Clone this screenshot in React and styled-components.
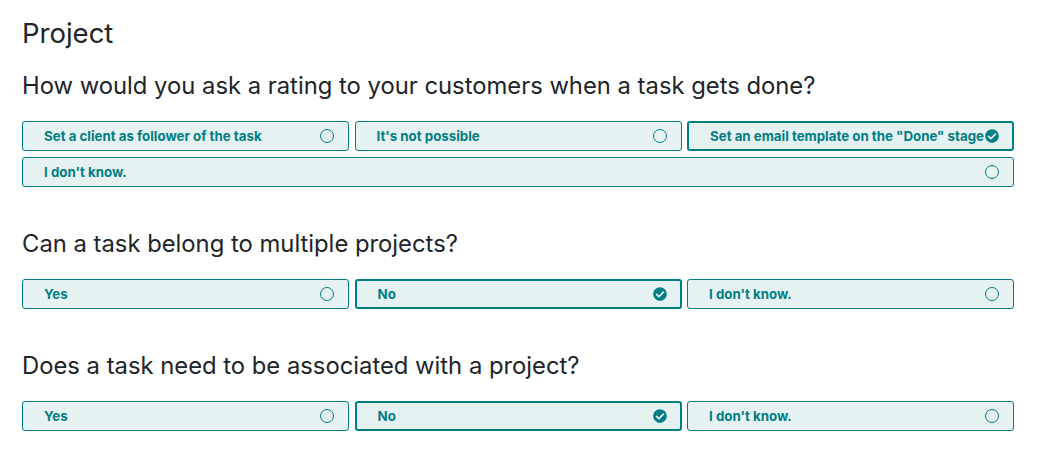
import React from 'react'
import styled, { createGlobalStyle } from 'styled-components'
import { FaCheckCircle } from 'react-icons/fa'

const GlobalStyle = createGlobalStyle`
  body {
    margin: 0;
    background: #ffffff;
    font-family: Inter, "Noto Sans", sans-serif;
  }
`

const questions = [
  {
    text: 'How would you ask a rating to your customers when a task gets done?',
    answers: [
      'Set a client as follower of the task',
      "It's not possible",
      'Set an email template on the "Done" stage',
      "I don't know.",
    ],
    picked: 2,
  },
  {
    text: 'Can a task belong to multiple projects?',
    answers: ['Yes', 'No', "I don't know."],
    picked: 1,
  },
  {
    text: 'Does a task need to be associated with a project?',
    answers: ['Yes', 'No', "I don't know."],
    picked: 1,
  },
]

function App() {
  return (
    <Page>
      <GlobalStyle />
      <Title>Project</Title>
      {questions.map((q, qi) => (
        <Section key={qi} first={qi === 0}>
          <Question>{q.text}</Question>
          <Options>
            {q.answers.map((a, ai) => (
              <Option key={ai} selected={ai === q.picked}>
                <Label>{a}</Label>
                {ai === q.picked ? (
                  <Checked>
                    <FaCheckCircle size={14} />
                  </Checked>
                ) : (
                  <Radio />
                )}
              </Option>
            ))}
          </Options>
        </Section>
      ))}
    </Page>
  )
}

export default App

const Page = styled.div`
  padding: 17px 24px 0 22px;
  color: #212529;
`

const Title = styled.h1`
  margin: 0;
  font-size: 27.5px;
  line-height: 32px;
  font-weight: 400;
`

const Section = styled.section`
  margin-top: ${p => (p.first ? '23px' : '43px')};
`

const Question = styled.h2`
  margin: 0 0 21px;
  font-size: 23.8px;
  line-height: 28px;
  font-weight: 400;
`

const Options = styled.div`
  display: flex;
  flex-wrap: wrap;
  gap: 6px 5.5px;
`

const Option = styled.div`
  box-sizing: border-box;
  flex: 1 0 calc((100% - 11px) / 3);
  min-width: 0;
  height: 30px;
  display: flex;
  align-items: center;
  padding: 0 ${p => (p.selected ? '13px' : '14px')} 0 21px;
  background: #e6f2f2;
  border: ${p => (p.selected ? '2px' : '1px')} solid #017e84;
  border-radius: 3px;
  color: #017e84;
`

const Label = styled.span`
  flex: 1 1 auto;
  min-width: 0;
  font-size: 13.3px;
  font-weight: 700;
  white-space: nowrap;
`

const Radio = styled.span`
  box-sizing: border-box;
  flex-shrink: 0;
  width: 14px;
  height: 14px;
  border: 1.4px solid #017e84;
  border-radius: 50%;
`

const Checked = styled.span`
  flex-shrink: 0;
  display: flex;
  width: 14px;
  height: 14px;
  color: #017e84;
`
